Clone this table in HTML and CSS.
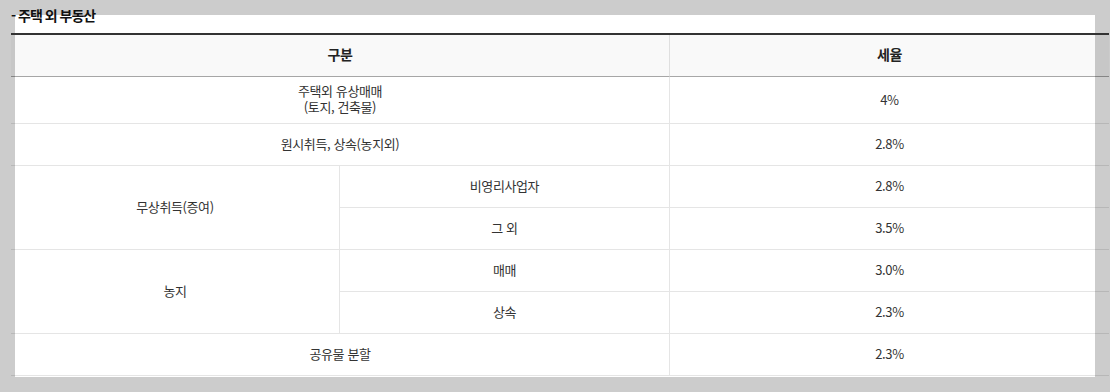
FILE: index.html
```html
<!DOCTYPE html>
<html lang="ko">
<head>
<meta charset="utf-8">
<title>주택 외 부동산</title>
<link rel="stylesheet" href="styles.css">
</head>
<body>
<div class="sheet">
  <div class="content">
    <h3 class="title">- 주택 외 부동산</h3>
    <table class="tax">
      <colgroup>
        <col class="c1">
        <col class="c2">
        <col class="c3">
      </colgroup>
      <thead>
        <tr>
          <th colspan="2" class="div">구분</th>
          <th>세율</th>
        </tr>
      </thead>
      <tbody>
        <tr class="tall">
          <td colspan="2" class="div"><span class="ln">주택외 유상매매</span><span class="ln">(토지, 건축물)</span></td>
          <td>4%</td>
        </tr>
        <tr>
          <td colspan="2" class="div">원시취득, 상속(농지외)</td>
          <td>2.8%</td>
        </tr>
        <tr>
          <td rowspan="2" class="div">무상취득(증여)</td>
          <td class="div">비영리사업자</td>
          <td>2.8%</td>
        </tr>
        <tr>
          <td class="div">그 외</td>
          <td>3.5%</td>
        </tr>
        <tr>
          <td rowspan="2" class="div">농지</td>
          <td class="div">매매</td>
          <td>3.0%</td>
        </tr>
        <tr>
          <td class="div">상속</td>
          <td>2.3%</td>
        </tr>
        <tr>
          <td colspan="2" class="div">공유물 분할</td>
          <td>2.3%</td>
        </tr>
      </tbody>
    </table>
  </div>
</div>
</body>
</html>
```
FILE: styles.css
```css
html, body {
  margin: 0;
  padding: 0;
}
body {
  background: #cccccc;
  font-family: "Noto Sans CJK KR", "Noto Sans", sans-serif;
  color: #333;
  width: 1110px;
  height: 392px;
  overflow: hidden;
}
.sheet {
  display: flow-root;
  margin: 15px 15px 0 15px;
  height: 362px;
  background: #ffffff;
}
.content {
  margin: -10px -14px 0 -4px;
}
.title {
  margin: 0;
  font-size: 14px;
  line-height: 20px;
  height: 20px;
  font-weight: 700;
  color: #111;
  letter-spacing: -1px;
}
.tax {
  margin-top: 8px;
  width: 1098px;
  table-layout: fixed;
  border-collapse: separate;
  border-spacing: 0;
  border-top: 2px solid #333;
  font-size: 13px;
}
.c1 { width: 329px; }
.c2 { width: 330px; }
.c3 { width: 439px; }
.tax tr {
  height: 42px;
}
.tax tr.tall {
  height: 47px;
}
.tax th, .tax td {
  padding: 0 0 2px 0;
  text-align: center;
  vertical-align: middle;
  border-bottom: 1px solid rgba(0, 0, 0, 0.1);
  line-height: 17px;
  letter-spacing: -0.4px;
}
.tax .ln {
  display: block;
  line-height: 16px;
  height: 16px;
}
.tax th {
  background: rgba(0, 0, 0, 0.025);
  font-size: 14px;
  font-weight: 700;
  color: #222;
  border-bottom: 1px solid rgba(0, 0, 0, 0.33);
}
.tax .div {
  border-right: 1px solid rgba(0, 0, 0, 0.1);
}
.tax td {
  color: #333;
}
```
